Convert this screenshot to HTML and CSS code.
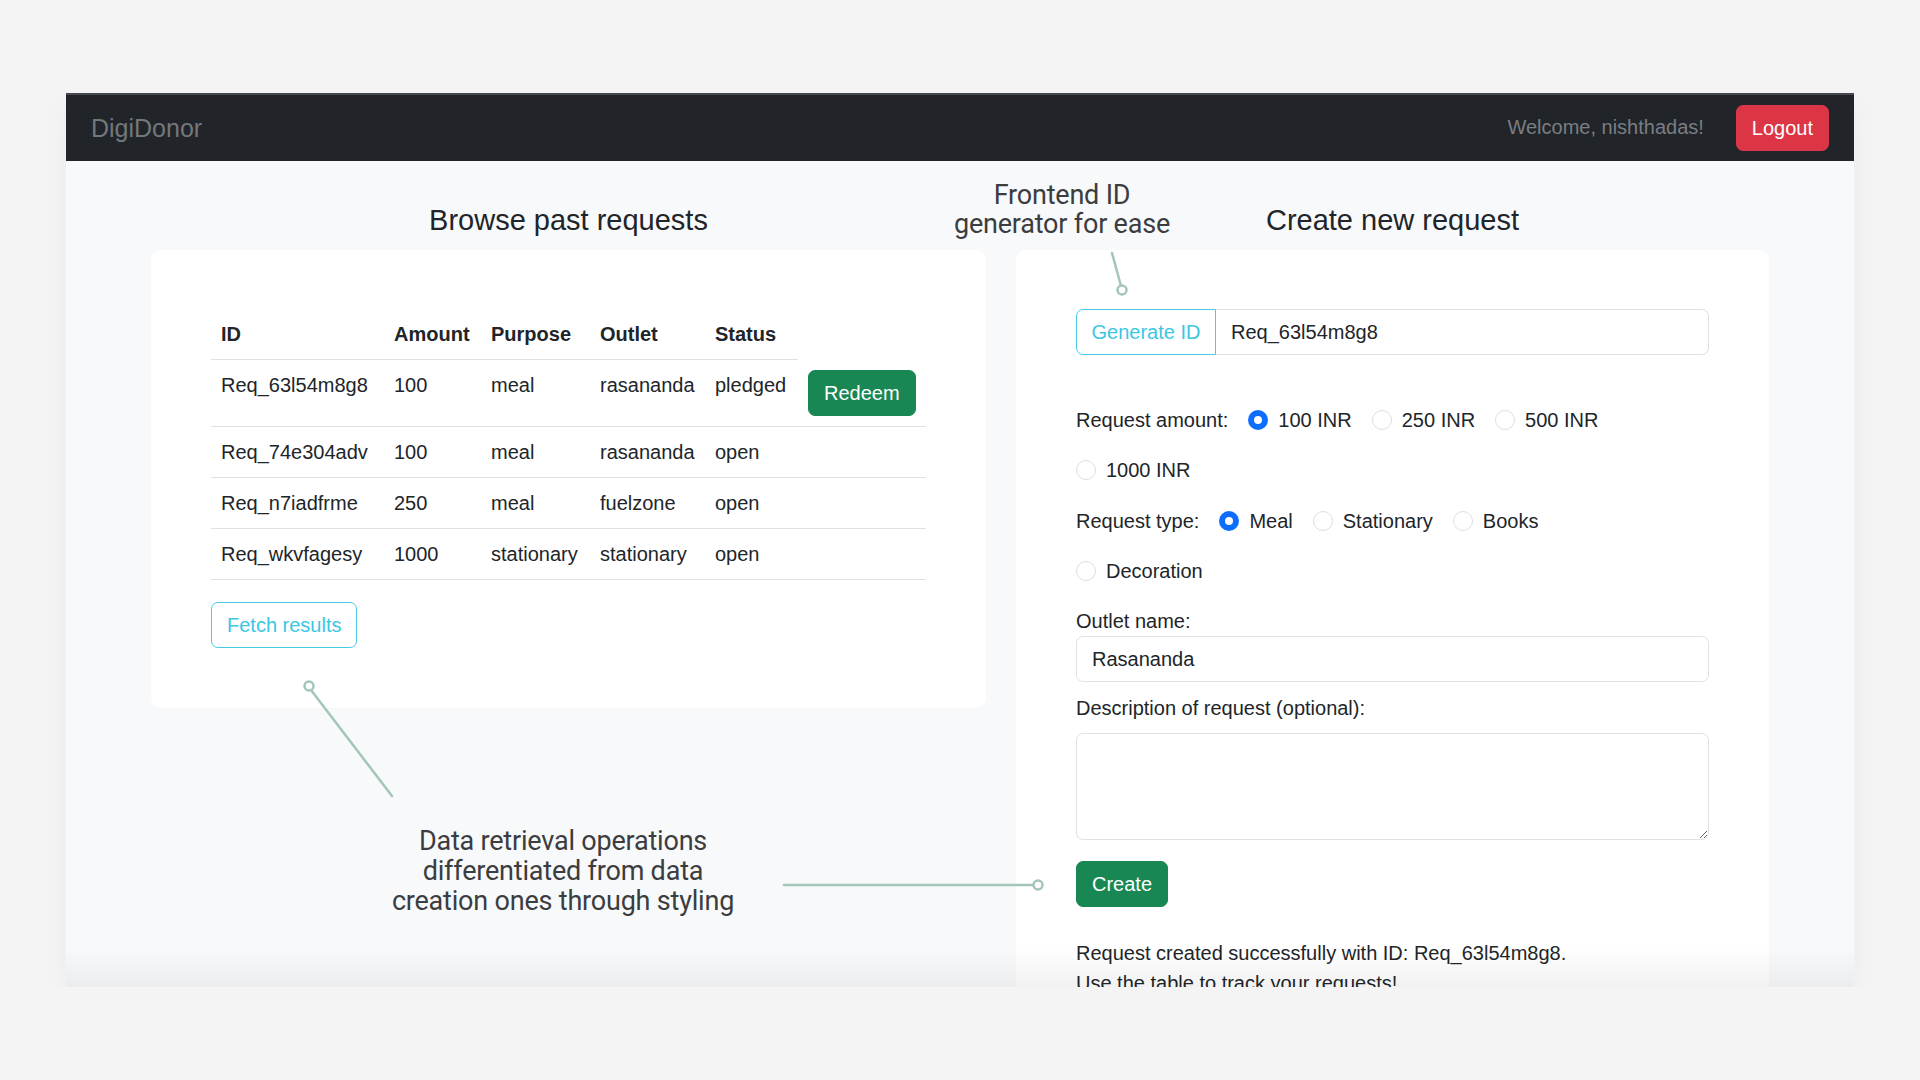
FILE: index.html
```html
<!DOCTYPE html>
<html lang="en">
<head>
<meta charset="utf-8">
<title>DigiDonor</title>
<link rel="stylesheet" href="styles.css">
</head>
<body>
<div class="frame">
  <nav class="navbar">
    <span class="brand">DigiDonor</span>
    <div class="nav-right">
      <span class="welcome">Welcome, nishthadas!</span>
      <button class="btn btn-danger">Logout</button>
    </div>
  </nav>

  <main class="main">
    <section class="col">
      <h2 class="col-title">Browse past requests</h2>
      <div class="card">
        <table class="table">
          <colgroup>
            <col class="c-id"><col class="c-amt"><col class="c-pur"><col class="c-out"><col class="c-st"><col class="c-act">
          </colgroup>
          <thead>
            <tr><th>ID</th><th>Amount</th><th>Purpose</th><th>Outlet</th><th>Status</th></tr>
          </thead>
          <tbody>
            <tr><td>Req_63l54m8g8</td><td>100</td><td>meal</td><td>rasananda</td><td>pledged</td><td><button class="btn btn-success">Redeem</button></td></tr>
            <tr><td>Req_74e304adv</td><td>100</td><td>meal</td><td>rasananda</td><td>open</td><td></td></tr>
            <tr><td>Req_n7iadfrme</td><td>250</td><td>meal</td><td>fuelzone</td><td>open</td><td></td></tr>
            <tr><td>Req_wkvfagesy</td><td>1000</td><td>stationary</td><td>stationary</td><td>open</td><td></td></tr>
          </tbody>
        </table>
        <div class="fetch-row"><button class="btn btn-outline-info">Fetch results</button></div>
      </div>
    </section>

    <section class="col">
      <h2 class="col-title">Create new request</h2>
      <div class="card">
        <div class="input-group">
          <button class="btn btn-outline-info ig-btn">Generate ID</button>
          <input class="form-control ig-input" type="text" value="Req_63l54m8g8">
        </div>

        <div class="radio-group first">
          <span class="group-label">Request amount:</span>
          <label class="check"><input type="radio" name="amt" checked><span>100 INR</span></label>
          <label class="check"><input type="radio" name="amt"><span>250 INR</span></label>
          <label class="check"><input type="radio" name="amt"><span>500 INR</span></label>
          <label class="check"><input type="radio" name="amt"><span>1000 INR</span></label>
        </div>

        <div class="radio-group">
          <span class="group-label">Request type:</span>
          <label class="check"><input type="radio" name="type" checked><span>Meal</span></label>
          <label class="check"><input type="radio" name="type"><span>Stationary</span></label>
          <label class="check"><input type="radio" name="type"><span>Books</span></label>
          <label class="check"><input type="radio" name="type"><span>Decoration</span></label>
        </div>

        <label class="field-label outlet-label">Outlet name:</label>
        <input class="form-control" type="text" value="Rasananda">

        <label class="field-label desc-label">Description of request (optional):</label>
        <textarea class="form-control textarea"></textarea>

        <button class="btn btn-success create-btn">Create</button>

        <p class="success">Request created successfully with ID: Req_63l54m8g8.<br>Use the table to track your requests!</p>
      </div>
    </section>
  </main>

  <div class="note note-top">Frontend ID<br>generator for ease</div>
  <div class="note note-bottom">Data retrieval operations<br>differentiated from data<br>creation ones through styling</div>

  <svg class="pointers" width="1788" height="894" viewBox="0 0 1788 894">
    <line x1="1046" y1="160" x2="1055" y2="193" />
    <circle cx="1056" cy="197" r="4.5" />
    <line x1="245" y1="597" x2="326" y2="703" />
    <circle cx="243" cy="593" r="4.5" />
    <line x1="718" y1="792" x2="967" y2="792" />
    <circle cx="972" cy="792" r="4.5" />
  </svg>

  <div class="bottom-fade"></div>
</div>
</body>
</html>
```

FILE: styles.css
```css
* { box-sizing: border-box; }

html, body {
  margin: 0;
  padding: 0;
}

body {
  background: #f4f4f4;
  font-family: "Liberation Sans", Arial, sans-serif;
  font-size: 20px;
  line-height: 30px;
  color: #212529;
  padding-top: 93px;
}

.frame {
  position: relative;
  width: 1788px;
  height: 894px;
  margin: 0 auto;
  background: #f8f9fa;
  overflow: hidden;
  box-shadow: 0 12px 30px rgba(0, 0, 0, 0.04);
}

/* navbar */
.navbar {
  height: 68px;
  background: #212529;
  border-top: 2px solid #45484c;
  display: flex;
  align-items: center;
  justify-content: space-between;
  padding: 0 25px;
}

.brand {
  font-size: 25px;
  color: #73777c;
  line-height: 30px;
}

.nav-right {
  display: flex;
  align-items: center;
  gap: 32px;
}

.welcome {
  color: #7a7e83;
  font-size: 20px;
  margin-top: -3px;
}

/* buttons */
.btn {
  font-family: inherit;
  font-size: 20px;
  line-height: 30px;
  padding: 7px 15px;
  border: 1px solid transparent;
  border-radius: 7px;
  cursor: pointer;
  background: transparent;
}

.btn-danger {
  background: #dc3545;
  border-color: #dc3545;
  color: #fff;
}

.btn-success {
  background: #198754;
  border-color: #198754;
  color: #fff;
}

.btn-outline-info {
  color: #3cc6e4;
  border-color: #45cbe6;
  background: #fff;
}

/* layout */
.main {
  display: grid;
  grid-template-columns: 835px 753px;
  column-gap: 30px;
  padding: 0 85px;
}

.col-title {
  font-size: 29px;
  font-weight: 400;
  line-height: 35px;
  text-align: center;
  margin: 42px 0 12px;
  color: #212529;
}

.card {
  background: #fff;
  border-radius: 10px;
  padding: 59px 60px 60px;
}

/* table */
.table {
  width: 100%;
  border-collapse: collapse;
  table-layout: fixed;
}

.c-id { width: 173px; }
.c-amt { width: 97px; }
.c-pur { width: 109px; }
.c-out { width: 115px; }
.c-st { width: 93px; }
.c-act { width: 128px; }

.table th,
.table td {
  padding: 10px;
  text-align: left;
  vertical-align: top;
  border-bottom: 1px solid #dee2e6;
  white-space: nowrap;
  font-size: 20px;
  line-height: 30px;
}

.table th {
  font-weight: 700;
}

.fetch-row {
  margin-top: 22px;
}

/* form */
.input-group {
  display: flex;
}

.ig-btn {
  border-radius: 7px 0 0 7px;
  width: 140px;
  padding-left: 0;
  padding-right: 0;
}

.form-control {
  display: block;
  width: 100%;
  font-family: inherit;
  font-size: 20px;
  line-height: 30px;
  padding: 7px 15px;
  color: #212529;
  background: #fff;
  border: 1px solid #dee2e6;
  border-radius: 7px;
}

.ig-input {
  flex: 1;
  border-left: 0;
  border-radius: 0 7px 7px 0;
}

.radio-group {
  display: flex;
  flex-wrap: wrap;
  align-items: center;
  row-gap: 20px;
  max-width: 610px;
  margin-top: 21px;
}

.radio-group.first {
  margin-top: 50px;
}

.group-label {
  margin-right: 20px;
  line-height: 30px;
}

.check {
  display: flex;
  align-items: center;
  margin-right: 20px;
  height: 30px;
}

.check input {
  -webkit-appearance: none;
  appearance: none;
  width: 20px;
  height: 20px;
  margin: 0 10px 0 0;
  border: 1px solid #dcdfe2;
  border-radius: 50%;
  background: #fff;
}

.check input:checked {
  border: 6px solid #0d6efd;
  background: #fff;
}

.field-label {
  display: block;
  line-height: 30px;
}

.outlet-label {
  margin-top: 20px;
}

.desc-label {
  margin-top: 11px;
  margin-bottom: 10px;
}

.textarea {
  height: 107px;
  resize: vertical;
}

.create-btn {
  display: block;
  margin-top: 21px;
}

.success {
  margin: 31px 0 0;
  line-height: 30px;
}

/* annotations overlay */
.note {
  position: absolute;
  font-family: Roboto, "Liberation Sans", sans-serif;
  font-size: 27px;
  text-align: center;
  color: #3b3d40;
  letter-spacing: -0.2px;
}

.note-top {
  left: 846px;
  top: 88px;
  width: 300px;
  line-height: 29px;
}

.note-bottom {
  left: 297px;
  top: 733px;
  width: 400px;
  line-height: 30px;
}

.pointers {
  position: absolute;
  left: 0;
  top: 0;
  pointer-events: none;
}

.pointers line {
  stroke: #a4c6b9;
  stroke-width: 2.5;
  stroke-linecap: round;
}

.pointers circle {
  fill: #fff;
  stroke: #a4c6b9;
  stroke-width: 2.5;
}

.bottom-fade {
  position: absolute;
  left: 0;
  right: 0;
  bottom: 0;
  height: 40px;
  background: linear-gradient(to bottom, rgba(0, 0, 0, 0), rgba(0, 0, 0, 0.05));
  pointer-events: none;
}
```
